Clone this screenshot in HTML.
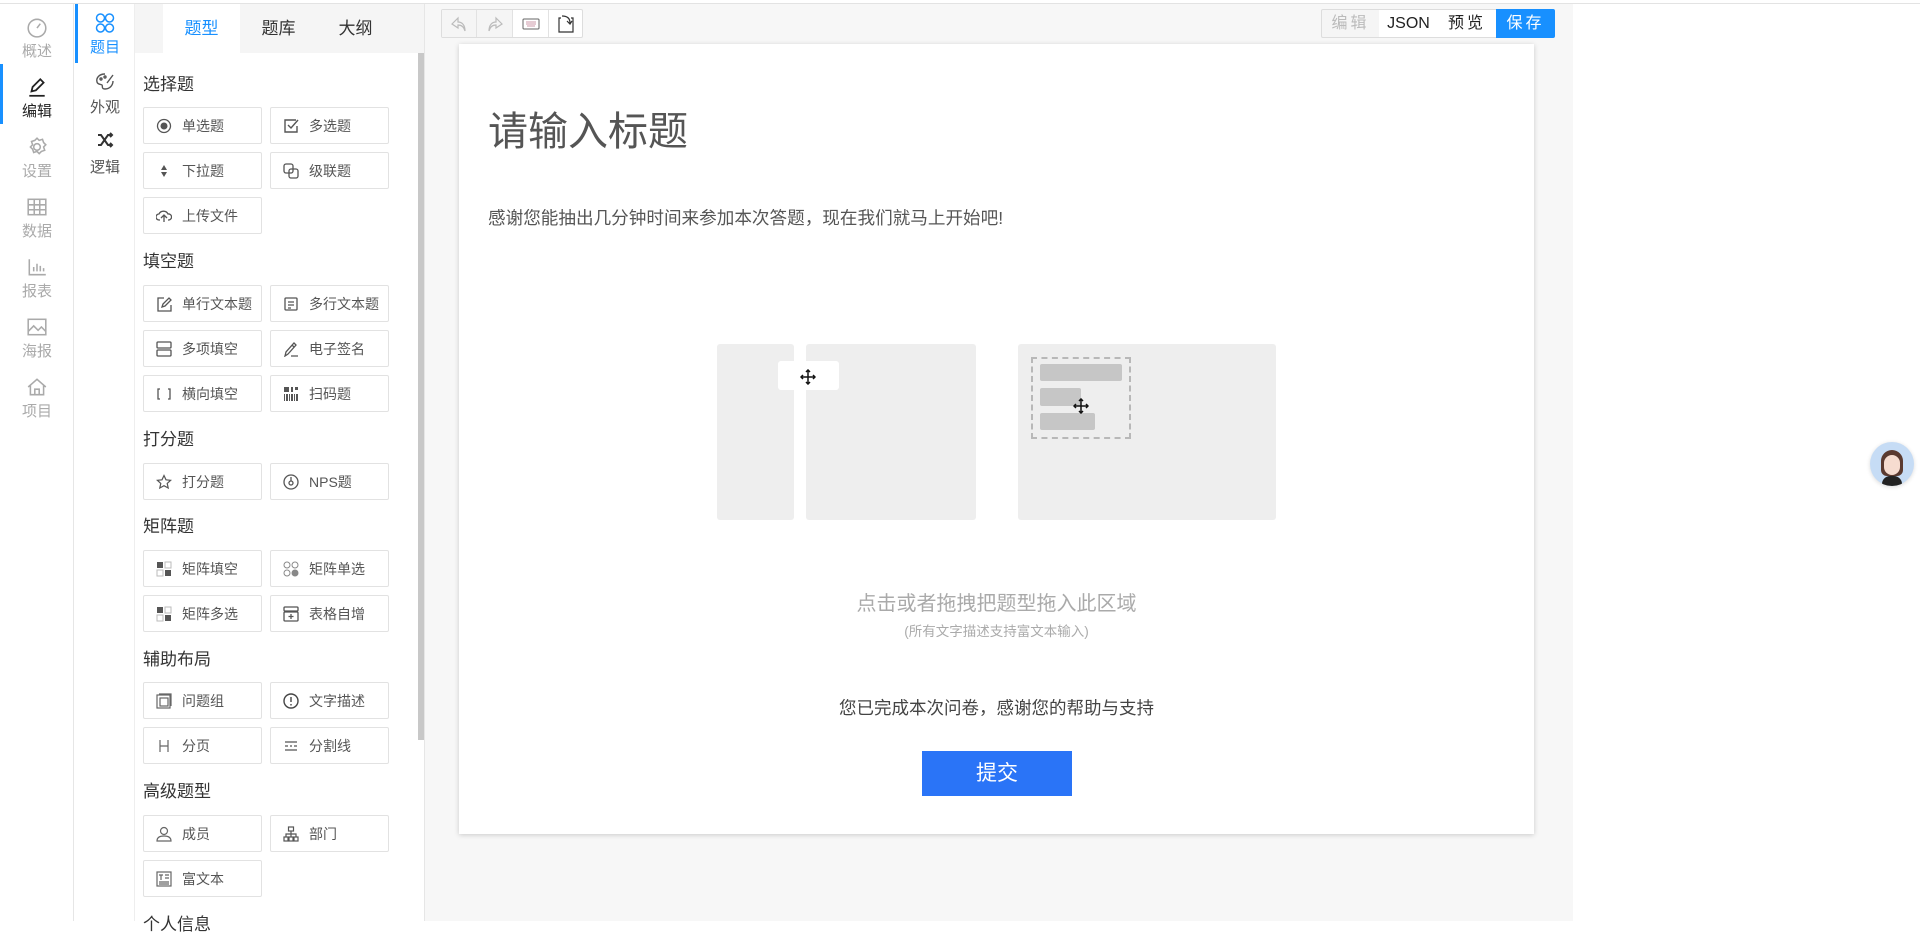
<!DOCTYPE html>
<html><head><meta charset="utf-8"><style>
*{margin:0;padding:0;box-sizing:border-box}
body{width:1920px;height:921px;overflow:hidden;background:#fff;font-family:"Liberation Sans","Noto Sans CJK SC",sans-serif;position:relative;color:#333}
.a{position:absolute}
.nav{left:0;top:4px;width:74px;height:917px;border-right:1px solid #e6e6e6;background:#fff}
.ni{position:absolute;left:0;width:74px;height:60px;text-align:center;color:#aaa;font-size:15px}
.ni svg{position:absolute;left:26px;top:12px}
.ni span{position:absolute;left:0;right:0;top:36px}
.sub{left:75px;top:4px;width:60px;height:917px;background:#fff;border-right:1px solid #eee}
.si{position:absolute;left:0;width:60px;height:60px;text-align:center;color:#555;font-size:15px}
.si svg{position:absolute;left:20px;top:8px}
.si span{position:absolute;left:0;right:0;top:32px}
.tabs{left:135px;top:4px;width:289px;height:49px;background:#f5f5f5}
.tab{position:absolute;top:0;height:49px;line-height:49px;font-size:17px;color:#333;text-align:center;width:77px}
.h{position:absolute;left:143px;font-size:17px;color:#333;line-height:20px}
.b{position:absolute;width:119px;height:37px;border:1px solid #e2e2e2;border-radius:2px;font-size:14px;color:#555;line-height:36px;padding-left:38px;background:#fff}
.b svg{position:absolute;left:12px;top:10px}
.tb{position:absolute;top:9px;height:29px;border:1px solid #ddd;text-align:center;line-height:27px;font-size:16px}
</style></head><body>
<div class="a" style="left:0;top:0;width:1920px;height:4px;background:#fff;border-bottom:1px solid #e3e3e3"></div>
<!-- nav -->
<div class="a nav">
 <div class="ni" style="top:0"><svg width="22" height="22" viewBox="0 0 20 20" fill="none" stroke="#aaa" stroke-width="1.4"><circle cx="10" cy="11" r="8"/><path d="M10 11l3-4M6 13h0M14 13h0"/></svg><span>概述</span></div>
 <div class="ni" style="top:60px;color:#222"><div class="a" style="left:0;top:0;width:3px;height:60px;background:#1890ff"></div><svg width="22" height="22" viewBox="0 0 20 20" fill="none" stroke="#222" stroke-width="1.6"><path d="M5 14l1-4 7-7 3 3-7 7z"/><path d="M3 18h14"/></svg><span>编辑</span></div>
 <div class="ni" style="top:120px"><svg width="22" height="22" viewBox="0 0 20 20" fill="none" stroke="#aaa" stroke-width="1.4"><path d="M10 2l2 2 3-1 1 3 2 2-2 2 1 3-3 1-2 2-2-2-3 1-1-3-2-2 2-2-1-3 3-1z"/><circle cx="10" cy="10" r="3"/></svg><span>设置</span></div>
 <div class="ni" style="top:180px"><svg width="22" height="22" viewBox="0 0 20 20" fill="none" stroke="#aaa" stroke-width="1.4"><rect x="2" y="3" width="16" height="14"/><path d="M2 8h16M2 12.5h16M7.5 3v14M12.5 3v14"/></svg><span>数据</span></div>
 <div class="ni" style="top:240px"><svg width="22" height="22" viewBox="0 0 20 20" fill="none" stroke="#aaa" stroke-width="1.4"><path d="M3 3v14h15M7 14v-4M10 14v-7M13 14v-5M16 14v-3"/></svg><span>报表</span></div>
 <div class="ni" style="top:300px"><svg width="22" height="22" viewBox="0 0 20 20" fill="none" stroke="#aaa" stroke-width="1.4"><rect x="2" y="3" width="16" height="14"/><path d="M2 14l5-5 4 4 3-3 4 4"/></svg><span>海报</span></div>
 <div class="ni" style="top:360px"><svg width="22" height="22" viewBox="0 0 20 20" fill="none" stroke="#aaa" stroke-width="1.4"><path d="M2 10l8-7 8 7M4 8v9h12V8M8 17v-5h4v5"/></svg><span>项目</span></div>
</div>
<!-- sub nav -->
<div class="a sub">
 <div class="si" style="top:0;color:#1890ff"><div class="a" style="left:0;top:0;width:3px;height:59px;background:#1890ff"></div><svg width="20" height="22" viewBox="0 0 20 22" fill="none" stroke="#1890ff" stroke-width="1.5"><circle cx="5.5" cy="6" r="4"/><circle cx="14.5" cy="6" r="4"/><circle cx="5.5" cy="16" r="4"/><circle cx="14.5" cy="16" r="4"/></svg><span>题目</span></div>
 <div class="si" style="top:60px"><svg width="20" height="18" viewBox="0 0 20 18" fill="none" stroke="#555" stroke-width="1.4"><path d="M10 2C4 2 1 6 2 10c1 3 4 2 5 3s-1 4 3 4c5 0 8-4 8-8"/><path d="M12 11l6-8"/><circle cx="6" cy="7" r="1"/><circle cx="10" cy="5" r="1"/></svg><span>外观</span></div>
 <div class="si" style="top:120px"><svg width="20" height="16" viewBox="0 0 20 16" fill="none" stroke="#333" stroke-width="2"><path d="M3 3h3l7 10h4M3 13h3l7-10h4M15 1l2 2-2 2M15 11l2 2-2 2"/></svg><span>逻辑</span></div>
</div>
<!-- panel -->
<div class="a tabs"><div class="a" style="left:28px;top:0;width:77px;height:49px;background:#fff"></div>
<div class="tab" style="left:28px;color:#1890ff">题型</div><div class="tab" style="left:105px">题库</div><div class="tab" style="left:182px">大纲</div></div>
<div class="a" style="left:418px;top:53px;width:6px;height:687px;background:#c8c8c8"></div>
<div class="a" style="left:424px;top:4px;width:1px;height:917px;background:#e6e6e6"></div>

<div class="h" style="top:75px">选择题</div>
<div class="b" style="left:143px;top:107px"><svg width="16" height="16"><circle cx="8" cy="8" r="6.5" fill="none" stroke="#555" stroke-width="1.3"/><circle cx="8" cy="8" r="3.5" fill="#555"/></svg>单选题</div>
<div class="b" style="left:270px;top:107px"><svg width="16" height="16" fill="none" stroke="#555" stroke-width="1.4"><path d="M13 2H2v12h12V8"/><path d="M5 7l3 3 7-8"/></svg>多选题</div>
<div class="b" style="left:143px;top:152px"><svg width="16" height="16" fill="#555"><path d="M8 2l3 5H5zM8 14l3-5H5z"/></svg>下拉题</div>
<div class="b" style="left:270px;top:152px"><svg width="16" height="16" fill="none" stroke="#555" stroke-width="1.3"><rect x="1" y="1" width="9" height="9" rx="2"/><rect x="6" y="6" width="9" height="9" rx="2"/></svg>级联题</div>
<div class="b" style="left:143px;top:197px"><svg width="16" height="16" fill="none" stroke="#555" stroke-width="1.3"><path d="M4 12H3a3 3 0 010-6 5 5 0 019 0 3 3 0 011 6h-1M8 14V7M5 10l3-3 3 3"/></svg>上传文件</div>

<div class="h" style="top:252px">填空题</div>
<div class="b" style="left:143px;top:285px"><svg width="16" height="16" fill="none" stroke="#555" stroke-width="1.3"><path d="M8 2H2v13h13V9"/><path d="M6 11l1-3 6-6 2 2-6 6z"/></svg>单行文本题</div>
<div class="b" style="left:270px;top:285px"><svg width="16" height="16" fill="none" stroke="#555" stroke-width="1.3"><rect x="2" y="2" width="12" height="12" rx="1"/><path d="M5 6h6M5 9h6M5 12h3"/></svg>多行文本题</div>
<div class="b" style="left:143px;top:330px"><svg width="16" height="16" fill="none" stroke="#555" stroke-width="1.3"><rect x="1" y="1" width="14" height="6" rx="1"/><rect x="1" y="9" width="14" height="6" rx="1"/></svg>多项填空</div>
<div class="b" style="left:270px;top:330px"><svg width="16" height="16" fill="none" stroke="#555" stroke-width="1.3"><path d="M2 15l1-4 8-9 2 2-8 9zM9 4l2 2M8 15h7"/></svg>电子签名</div>
<div class="b" style="left:143px;top:375px"><svg width="16" height="16" fill="none" stroke="#555" stroke-width="1.3"><path d="M4 3H2v10h2M12 3h2v10h-2M6 8h0M8 8h0M10 8h0"/></svg>横向填空</div>
<div class="b" style="left:270px;top:375px"><svg width="16" height="16" fill="#555"><rect x="1" y="1" width="5" height="5"/><rect x="8" y="1" width="2" height="5"/><rect x="12" y="1" width="3" height="3"/><rect x="1" y="8" width="1" height="7"/><rect x="3" y="8" width="2" height="7"/><rect x="6" y="8" width="1" height="7"/><rect x="8" y="8" width="2" height="7"/><rect x="11" y="8" width="1" height="7"/><rect x="13" y="8" width="2" height="7"/></svg>扫码题</div>

<div class="h" style="top:430px">打分题</div>
<div class="b" style="left:143px;top:463px"><svg width="16" height="16" fill="none" stroke="#555" stroke-width="1.2"><path d="M8 1.5l2 4.3 4.6.5-3.4 3.1 1 4.6L8 11.7 3.8 14l1-4.6L1.4 6.3 6 5.8z"/></svg>打分题</div>
<div class="b" style="left:270px;top:463px"><svg width="16" height="16" fill="none" stroke="#555" stroke-width="1.3"><circle cx="8" cy="8" r="7"/><circle cx="8" cy="9" r="2"/><path d="M8 3v4"/></svg>NPS题</div>

<div class="h" style="top:517px">矩阵题</div>
<div class="b" style="left:143px;top:550px"><svg width="16" height="16"><rect x="1" y="1" width="6" height="6" fill="#555"/><rect x="9" y="9" width="6" height="6" fill="#555"/><rect x="9" y="1" width="6" height="6" fill="none" stroke="#bbb"/><rect x="1" y="9" width="6" height="6" fill="none" stroke="#bbb"/></svg>矩阵填空</div>
<div class="b" style="left:270px;top:550px"><svg width="16" height="16" fill="none" stroke="#888"><circle cx="4" cy="4" r="3"/><circle cx="12" cy="4" r="3"/><circle cx="4" cy="12" r="3"/><circle cx="12" cy="12" r="3" fill="#888"/></svg>矩阵单选</div>
<div class="b" style="left:143px;top:595px"><svg width="16" height="16"><rect x="1" y="1" width="6" height="6" fill="#555"/><rect x="9" y="9" width="6" height="6" fill="#555"/><rect x="9" y="1" width="6" height="6" fill="none" stroke="#bbb"/><rect x="1" y="9" width="6" height="6" fill="none" stroke="#bbb"/></svg>矩阵多选</div>
<div class="b" style="left:270px;top:595px"><svg width="16" height="16" fill="none" stroke="#555" stroke-width="1.3"><rect x="1" y="1" width="14" height="4" rx="1"/><rect x="1" y="6" width="14" height="9" rx="1"/><path d="M8 8v5M5.5 10.5h5"/></svg>表格自增</div>

<div class="h" style="top:650px">辅助布局</div>
<div class="b" style="left:143px;top:682px"><svg width="16" height="16" fill="none" stroke="#666" stroke-width="1.2"><rect x="1" y="2" width="13" height="13"/><rect x="4" y="5" width="8" height="8"/><path d="M3 1h12v12"/></svg>问题组</div>
<div class="b" style="left:270px;top:682px"><svg width="16" height="16" fill="none" stroke="#444" stroke-width="1.4"><circle cx="8" cy="8" r="7"/><path d="M8 4v5M8 11v1.5"/></svg>文字描述</div>
<div class="b" style="left:143px;top:727px"><svg width="16" height="16" fill="none" stroke="#666" stroke-width="1.2"><path d="M4 2v12M12 2v12M4 8h8"/></svg>分页</div>
<div class="b" style="left:270px;top:727px"><svg width="16" height="16" fill="none" stroke="#555" stroke-width="1.3"><path d="M2 4h12M2 8h3M7 8h2M11 8h3M2 12h12"/></svg>分割线</div>

<div class="h" style="top:782px">高级题型</div>
<div class="b" style="left:143px;top:815px"><svg width="16" height="16" fill="none" stroke="#666" stroke-width="1.2"><circle cx="8" cy="5" r="3.5"/><path d="M1 15c0-4 3-5 7-5s7 1 7 5z"/></svg>成员</div>
<div class="b" style="left:270px;top:815px"><svg width="16" height="16" fill="none" stroke="#555" stroke-width="1.2"><rect x="5.5" y="1" width="5" height="4"/><rect x="1" y="11" width="4" height="4"/><rect x="6" y="11" width="4" height="4"/><rect x="11" y="11" width="4" height="4"/><path d="M8 5v6M3 11V8h10v3"/></svg>部门</div>
<div class="b" style="left:143px;top:860px"><svg width="16" height="16" fill="none" stroke="#666" stroke-width="1.2"><rect x="1" y="1" width="14" height="14"/><path d="M3 4h4M5 4v5M9 4h4M9 7h4M3 11h10M3 13h10"/></svg>富文本</div>
<div class="h" style="top:915px">个人信息</div>

<!-- canvas -->
<div class="a" style="left:425px;top:4px;width:1148px;height:917px;background:#f7f7f7"></div>
<div class="a" style="left:441px;top:9px;width:142px;height:29px;border:1px solid #ddd;background:#fff;border-radius:2px;overflow:hidden">
 <div class="a" style="left:0;top:0;width:70px;height:27px;background:#f5f5f5"></div>
 <div class="a" style="left:34px;top:0;width:1px;height:27px;background:#e2e2e2"></div>
 <div class="a" style="left:70px;top:0;width:1px;height:27px;background:#e2e2e2"></div>
 <div class="a" style="left:106px;top:0;width:1px;height:27px;background:#e2e2e2"></div>
 <svg class="a" style="left:8px;top:5px" width="18" height="18" fill="none" stroke="#bbb" stroke-width="1.2"><path d="M8 3L2 9l6 4V10c4 0 6 2 7 6 0-6-3-9-7-9z"/></svg>
 <svg class="a" style="left:44px;top:5px" width="18" height="18" fill="none" stroke="#bbb" stroke-width="1.2"><path d="M10 3l6 6-6 4V10c-4 0-6 2-7 6 0-6 3-9 7-9z"/></svg>
 <svg class="a" style="left:80px;top:7px" width="18" height="14" fill="none" stroke="#666" stroke-width="1"><rect x="1" y="2" width="16" height="10" rx="1"/><path d="M4 5h10M4 7h10M5 9h8" stroke="#c9a"/></svg>
 <svg class="a" style="left:115px;top:4px" width="18" height="20" fill="none" stroke="#333" stroke-width="1.2"><path d="M4 4H2v14h14V4h-2"/><path d="M5 2c5 0 8 2 8 7M10 7l3 3 2-3"/></svg>
</div>
<div class="tb" style="left:1321px;width:59px;background:#f5f5f5;color:#bbb;letter-spacing:3px;border-radius:2px 0 0 2px">编辑</div>
<div class="tb" style="left:1379px;width:60px;background:#fff;color:#222;border-left:none">JSON</div>
<div class="tb" style="left:1438px;width:59px;background:#fff;color:#222;letter-spacing:3px;border-left:none">预览</div>
<div class="tb" style="left:1496px;width:59px;background:#1890ff;color:#fff;letter-spacing:3px;border-color:#1890ff;border-radius:0 2px 2px 0">保存</div>

<div class="a" style="left:459px;top:44px;width:1075px;height:790px;background:#fff;box-shadow:0 1px 5px rgba(0,0,0,.18)"></div>
<div class="a" style="left:488px;top:106px;font-size:40px;color:#555;line-height:52px">请输入标题</div>
<div class="a" style="left:488px;top:206px;font-size:17.6px;color:#555;line-height:24px">感谢您能抽出几分钟时间来参加本次答题，现在我们就马上开始吧!</div>

<div class="a" style="left:717px;top:344px;width:77px;height:176px;background:#eee;border-radius:3px"></div>
<div class="a" style="left:806px;top:344px;width:170px;height:176px;background:#eee;border-radius:3px"></div>
<div class="a" style="left:778px;top:361px;width:61px;height:29px;background:#fff;border-radius:3px"></div>
<div class="a" style="left:1018px;top:344px;width:258px;height:176px;background:#eee;border-radius:3px"></div>
<div class="a" style="left:1031px;top:357px;width:100px;height:82px;border:2px dashed #b8b8b8"></div>
<div class="a" style="left:1040px;top:364px;width:82px;height:17px;background:#c6c6c6;border-radius:2px"></div>
<div class="a" style="left:1040px;top:388px;width:41px;height:18px;background:#c6c6c6;border-radius:2px"></div>
<div class="a" style="left:1040px;top:413px;width:55px;height:17px;background:#c6c6c6;border-radius:2px"></div>
<svg class="a" style="left:800px;top:369px" width="16" height="16" fill="none" stroke="#111" stroke-width="1.5"><path d="M8 1v14M1 8h14"/><path d="M6 3l2-2 2 2M6 13l2 2 2-2M3 6L1 8l2 2M13 6l2 2-2 2"/></svg>
<svg class="a" style="left:1073px;top:398px" width="16" height="16" fill="none" stroke="#111" stroke-width="1.5"><path d="M8 1v14M1 8h14"/><path d="M6 3l2-2 2 2M6 13l2 2 2-2M3 6L1 8l2 2M13 6l2 2-2 2"/></svg>

<div class="a" style="left:459px;width:1075px;top:591px;text-align:center;font-size:20px;color:#aaa;line-height:26px">点击或者拖拽把题型拖入此区域</div>
<div class="a" style="left:459px;width:1075px;top:622px;text-align:center;font-size:13.5px;color:#aaa;line-height:20px">(所有文字描述支持富文本输入)</div>
<div class="a" style="left:459px;width:1075px;top:696px;text-align:center;font-size:17.5px;color:#444;line-height:24px">您已完成本次问卷，感谢您的帮助与支持</div>
<div class="a" style="left:922px;top:751px;width:150px;height:45px;background:#2a74f7;color:#fff;font-size:21px;text-align:center;line-height:45px">提交</div>

<!-- avatar -->
<div class="a" style="left:1870px;top:442px;width:44px;height:44px;border-radius:50%;background:#c6dcf5;overflow:hidden;box-shadow:0 1px 4px rgba(0,0,0,.15)">
 <div class="a" style="left:11px;top:8px;width:22px;height:26px;border-radius:11px 11px 6px 6px;background:#5a3a30"></div>
 <div class="a" style="left:14px;top:13px;width:16px;height:20px;border-radius:8px;background:#f6dcd0"></div>
 <div class="a" style="left:12px;top:34px;width:20px;height:12px;border-radius:8px 8px 0 0;background:#222"></div>
</div>
</body></html>
